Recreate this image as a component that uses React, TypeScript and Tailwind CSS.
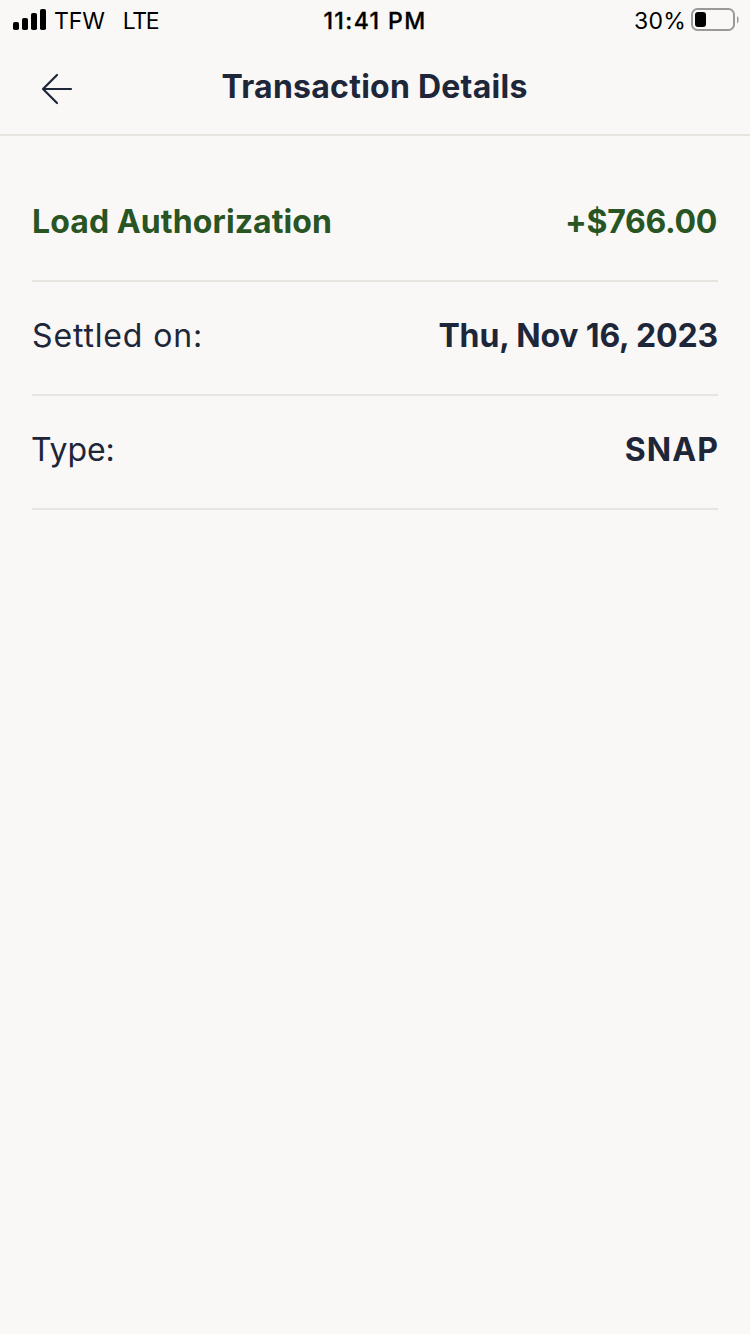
import type { ReactNode } from "react";

function StatusBar() {
  return (
    <div className="grid h-10 grid-cols-3 items-center whitespace-nowrap text-[23px] leading-[38px] text-black">
      <div className="flex h-10 items-center pl-[13px]">
        <svg width="33" height="22" viewBox="0 0 33 22" fill="#000">
          <rect x="0" y="13" width="6" height="8" rx="1.8" />
          <rect x="9" y="9" width="6" height="12" rx="1.8" />
          <rect x="18" y="4" width="6" height="17" rx="1.8" />
          <rect x="27" y="0" width="6" height="21" rx="1.8" />
        </svg>
        <span className="ml-2 pt-0.5 tracking-[-0.1px]">TFW</span>
        <span className="ml-[18px] pt-0.5 tracking-[-1.4px]">LTE</span>
      </div>
      <div className="h-10 pt-0.5 text-center font-medium tracking-[1.4px] [-webkit-text-stroke:0.3px_#000]">11:41 PM</div>
      <div className="flex h-10 items-center justify-end pr-[11px]">
        <span className="pt-0.5 tracking-[0.2px]">30%</span>
        <svg width="49" height="24" viewBox="0 0 49 24" className="-mt-px ml-1">
          <rect x="2" y="1" width="42" height="21" rx="5.5" fill="none" stroke="#999" strokeWidth="2" />
          <rect x="5" y="4" width="11" height="15" rx="3" fill="#000" />
          <path d="M47 8c2.2 1.5 2.2 6 0 7.500z" fill="#999" />
        </svg>
      </div>
    </div>
  );
}

function Row({ label, value }: { label: ReactNode; value: ReactNode }) {
  return (
    <div className="flex h-[114px] items-center justify-between border-b-2 border-[#e6e5df] pb-1">
      {label}
      {value}
    </div>
  );
}

export default function App() {
  return (
    <div className="min-h-[1334px] w-[750px] bg-[#f9f8f6] font-['Inter',sans-serif] text-[#1e2639]">
      <StatusBar />
      <header className="grid h-24 grid-cols-[1fr_auto_1fr] items-start border-b-2 border-[#e6e5df]">
        <svg
          width="32"
          height="32"
          viewBox="0 0 32 32"
          fill="none"
          stroke="#1e2639"
          strokeWidth="2.2"
          strokeLinecap="round"
          strokeLinejoin="round"
          className="ml-[41px] mt-[33px]"
        >
          <path d="M30 16H2M16 2L2 16l14 14" />
        </svg>
        <h1 className="mr-px mt-[27px] text-[32px] font-bold leading-10 tracking-[0.25px]">Transaction Details</h1>
      </header>
      <main className="ml-8 mr-8 pt-8 text-[32px] leading-10">
        <Row
          label={<span className="font-bold tracking-[0.1px] text-[#285523]">Load Authorization</span>}
          value={<span className="mr-px font-bold tracking-[-0.3px] text-[#285523]">+$766.00</span>}
        />
        <Row
          label={<span className="tracking-[0.85px]">Settled on:</span>}
          value={<span className="font-bold tracking-[-0.15px]">Thu, Nov 16, 2023</span>}
        />
        <Row
          label={<span className="-ml-px tracking-[-0.1px]">Type:</span>}
          value={<span className="-mr-px font-bold tracking-[1.1px]">SNAP</span>}
        />
      </main>
    </div>
  );
}
